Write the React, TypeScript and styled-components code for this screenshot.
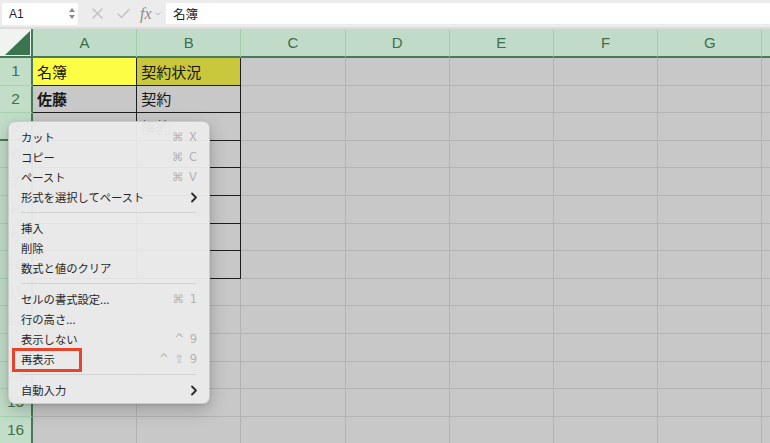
import { Fragment } from "react";
import styled, { createGlobalStyle } from "styled-components";

const GlobalStyle = createGlobalStyle`
html, body {
  margin: 0;
  padding: 0;
  width: 770px;
  height: 443px;
  overflow: hidden;
  background: #ffffff;
  font-family: "Liberation Sans", "Noto Sans CJK JP", sans-serif;
}
`;

const Window = styled.div`
position: relative;
width: 770px;
height: 443px;
overflow: hidden;
display: flex;
flex-direction: column;
`;

/* ---------- formula bar ---------- */
const FormulaBar = styled.div`
height: 27px;
flex-shrink: 0;
display: flex;
align-items: center;
background: #ececec;
border-bottom: 2px solid #dcdcdc;
padding-left: 2px;
`;

const NameBox = styled.div`
width: 76px;
height: 22px;
box-sizing: border-box;
background: #ffffff;
border-radius: 2px;
display: flex;
align-items: center;
justify-content: space-between;
padding: 0 3px 0 7px;
font-size: 12px;
color: #1f1f1f;
`;

const Spinner = styled.div`
display: flex;
flex-direction: column;
gap: 3px;
`;

const Icons = styled.div`
display: flex;
align-items: center;
gap: 14px;
padding: 0 0 0 14px;
width: 74px;
color: #b8b8b8;
`;

const Fx = styled.span`
font-family: "Liberation Serif", serif;
font-style: italic;
font-size: 16px;
color: #8a8a8a;
display: flex;
align-items: center;
gap: 3px;
margin-left: -4px;
`;

const FormulaInput = styled.div`
flex: 1;
height: 21px;
background: #ffffff;
display: flex;
align-items: center;
padding-left: 7px;
font-family: "Noto Sans CJK JP", sans-serif;
font-size: 12.5px;
color: #1a1a1a;
`;

/* ---------- sheet ---------- */
const Sheet = styled.div`
display: grid;
grid-template-columns: 33px repeat(8, 104.2px);
grid-template-rows: 29px;
grid-auto-rows: 27.6px;
`;

const Corner = styled.div`
background: #f1f3f1;
border-bottom: 2px solid #477a56;
border-right: 2px solid #477a56;
box-sizing: border-box;
display: flex;
align-items: flex-end;
justify-content: flex-end;
padding: 0 1px 1px 0;
`;

const ColHead = styled.div`
background: #c0dcc8;
box-sizing: border-box;
border-bottom: 2px solid #477a56;
border-right: 1px solid #9fd0aa;
display: flex;
align-items: center;
justify-content: center;
font-size: 15px;
color: #3e6c4c;
`;

const RowHead = styled.div<{ $gap?: boolean }>`
background: #c2dec9;
box-sizing: border-box;
border-right: 2px solid #477a56;
border-bottom: ${(p) => (p.$gap ? "2px solid #477a56" : "1px solid #a7d3b1")};
display: flex;
align-items: center;
justify-content: center;
font-size: 15.5px;
color: #41704f;
`;

const fills: Record<string, string> = {
  yellow: "#fdfd45",
  olive: "#c9c73c",
  gray: "#c8c8c8",
};

const Cell = styled.div<{ $fill?: string; $boxed?: boolean; $bold?: boolean }>`
background: ${(p) => fills[p.$fill || "gray"]};
box-sizing: border-box;
border-right: ${(p) => (p.$boxed ? "1px solid #1e1e1e" : "1.5px solid #b3b3b3")};
border-bottom: ${(p) => (p.$boxed ? "1px solid #1e1e1e" : "1.5px solid #b3b3b3")};
display: flex;
align-items: center;
padding-left: 4px;
font-family: "Noto Sans CJK JP", sans-serif;
font-size: 15px;
font-weight: ${(p) => (p.$bold ? 700 : 400)};
color: #161616;
white-space: nowrap;
overflow: hidden;
`;

/* ---------- context menu ---------- */
const Menu = styled.div`
position: absolute;
left: 8px;
top: 121px;
width: 202px;
box-sizing: border-box;
padding: 5px 0 3px;
background: rgba(233, 233, 233, 0.97);
border-radius: 7px;
border: 0.5px solid rgba(0, 0, 0, 0.12);
box-shadow: 0 6px 18px rgba(0, 0, 0, 0.22), 0 1px 3px rgba(0, 0, 0, 0.12);
font-family: "Noto Sans CJK JP", sans-serif;
`;

const Item = styled.div`
position: relative;
height: 20px;
display: flex;
align-items: center;
justify-content: space-between;
padding: 0 11px 0 12px;
font-size: 11.3px;
color: #262626;
`;

const Shortcut = styled.span`
font-family: "DejaVu Sans", "Liberation Sans", sans-serif;
font-size: 11.5px;
color: #b3b3b3;
letter-spacing: 1px;
`;

const Separator = styled.div`
height: 1px;
margin: 5px 13px 5px 12px;
background: #d3d3d3;
`;

const Highlight = styled.div`
position: absolute;
left: 3px;
top: -1px;
width: 70px;
height: 24px;
box-sizing: border-box;
border: 3px solid #e8432b;
`;

const Chevron = () => (
  <svg width="8" height="11" viewBox="0 0 8 11">
    <path d="M2 1.5 L6 5.5 L2 9.5" fill="none" stroke="#2a2a2a" strokeWidth="1.8" strokeLinecap="round" strokeLinejoin="round" />
  </svg>
);

const COLS = ["A", "B", "C", "D", "E", "F", "G", "H"];
const ROWS = ["1", "2", "3", "6", "7", "8", "9", "10", "11", "12", "13", "14", "15", "16"];

const data: Record<string, { text?: string; fill?: string; bold?: boolean }> = {
  A1: { text: "名簿", fill: "yellow" },
  B1: { text: "契約状況", fill: "olive" },
  A2: { text: "佐藤", bold: true },
  B2: { text: "契約" },
  B3: { text: "解約" },
};

type Entry = { label: string; key?: string; sub?: boolean; mark?: boolean } | "sep";

const menu: Entry[] = [
  { label: "カット", key: "⌘ X" },
  { label: "コピー", key: "⌘ C" },
  { label: "ペースト", key: "⌘ V" },
  { label: "形式を選択してペースト", sub: true },
  "sep",
  { label: "挿入" },
  { label: "削除" },
  { label: "数式と値のクリア" },
  "sep",
  { label: "セルの書式設定...", key: "⌘ 1" },
  { label: "行の高さ..." },
  { label: "表示しない", key: "^ 9" },
  { label: "再表示", key: "^ ⇧ 9", mark: true },
  "sep",
  { label: "自動入力", sub: true },
];

function App() {
  return (
    <Window>
      <GlobalStyle />
      <FormulaBar>
        <NameBox>
          A1
          <Spinner>
            <svg width="6" height="4" viewBox="0 0 6 4"><path d="M3 0 L6 4 L0 4 Z" fill="#8a8a8a" /></svg>
            <svg width="6" height="4" viewBox="0 0 6 4"><path d="M0 0 L6 0 L3 4 Z" fill="#8a8a8a" /></svg>
          </Spinner>
        </NameBox>
        <Icons>
          <svg width="11" height="11" viewBox="0 0 11 11">
            <path d="M1 1 L10 10 M10 1 L1 10" stroke="#c2c2c2" strokeWidth="1.5" strokeLinecap="round" />
          </svg>
          <svg width="13" height="11" viewBox="0 0 13 11">
            <path d="M1 6 L4.5 9.5 L12 1.5" fill="none" stroke="#c2c2c2" strokeWidth="1.5" strokeLinecap="round" strokeLinejoin="round" />
          </svg>
          <Fx>
            fx
            <svg width="6" height="4" viewBox="0 0 6 4"><path d="M0.5 0.5 L3 3 L5.5 0.5" fill="none" stroke="#b5b5b5" strokeWidth="1" /></svg>
          </Fx>
        </Icons>
        <FormulaInput>名簿</FormulaInput>
      </FormulaBar>

      <Sheet>
        <Corner>
          <svg width="25" height="24" viewBox="0 0 25 24">
            <path d="M0 24 L25 24 L25 0 Z" fill="#3b7550" />
          </svg>
        </Corner>
        {COLS.map((c) => (
          <ColHead key={c}>{c}</ColHead>
        ))}
        {ROWS.map((r, i) => (
          <Fragment key={r}>
            <RowHead $gap={r === "3"}>{r}</RowHead>
            {COLS.map((c, ci) => {
              const d = data[c + r];
              const boxed = ci < 2 && i < 8;
              return (
                <Cell key={c} $fill={d?.fill} $boxed={boxed} $bold={d?.bold}>
                  {d?.text}
                </Cell>
              );
            })}
          </Fragment>
        ))}
      </Sheet>

      <Menu>
        {menu.map((m, i) =>
          m === "sep" ? (
            <Separator key={i} />
          ) : (
            <Item key={i}>
              {m.mark && <Highlight />}
              <span>{m.label}</span>
              {m.key && <Shortcut>{m.key}</Shortcut>}
              {m.sub && <Chevron />}
            </Item>
          )
        )}
      </Menu>
    </Window>
  );
}

export default App;
